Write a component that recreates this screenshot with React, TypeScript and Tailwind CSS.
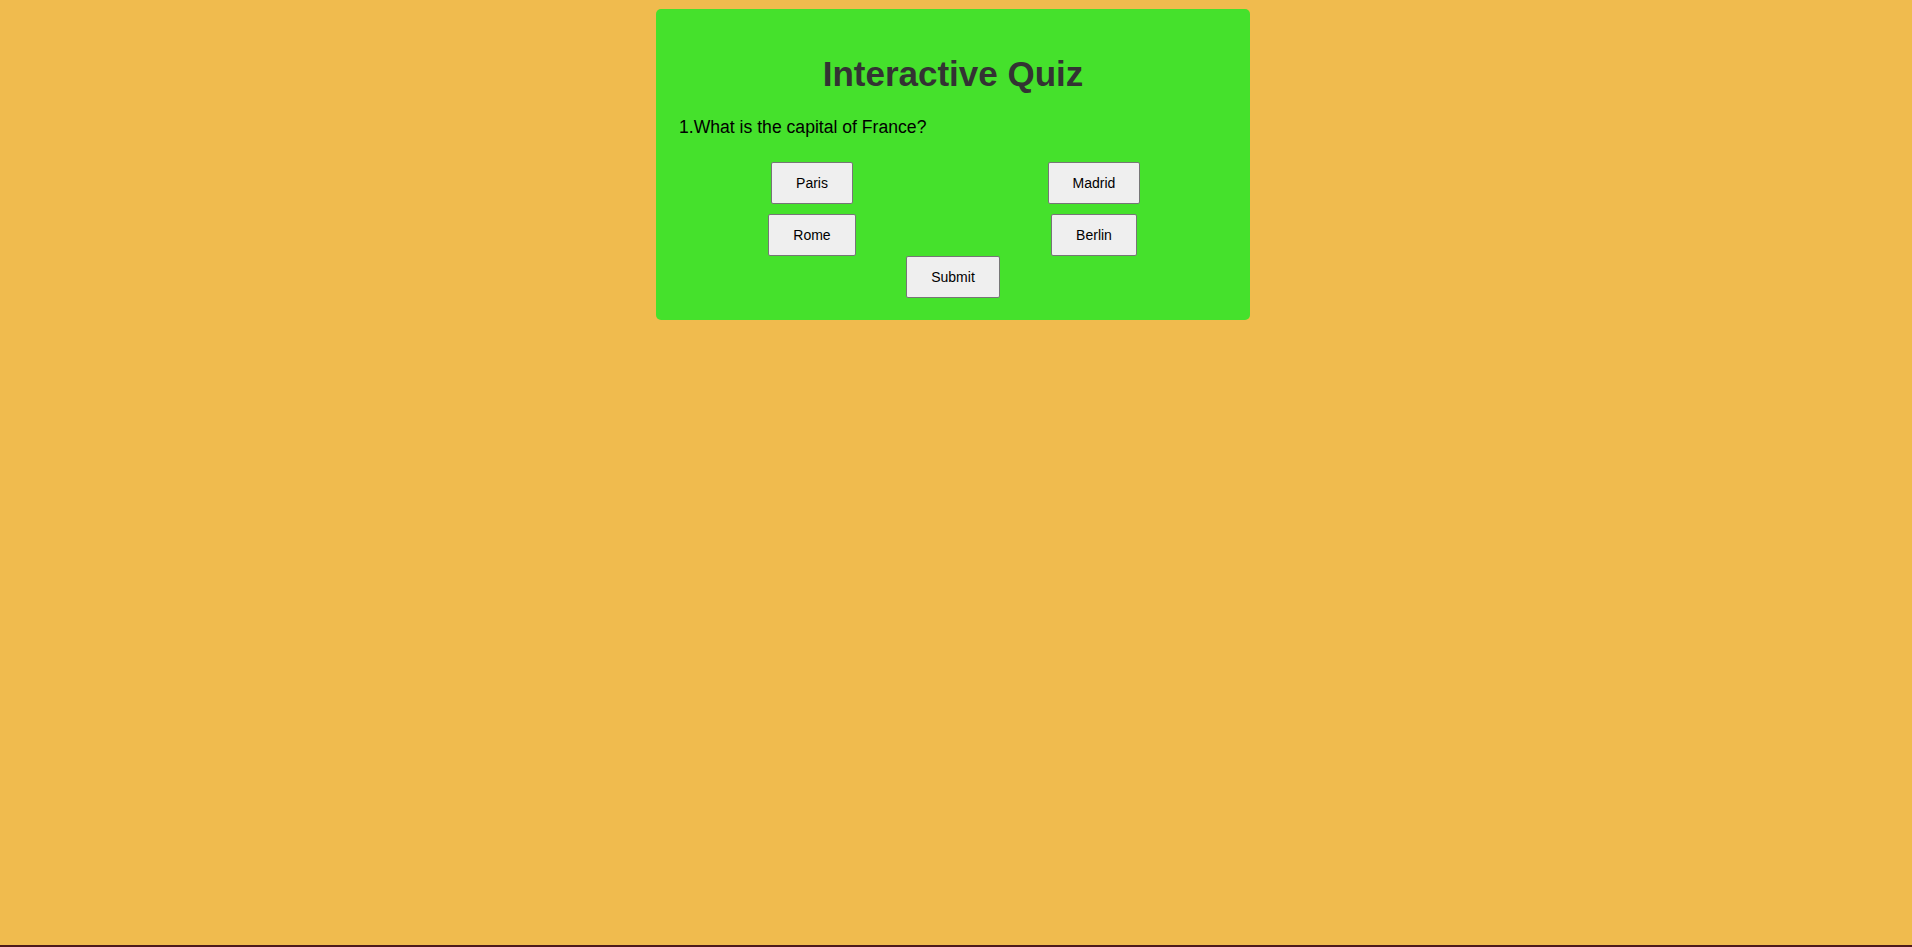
import React, { useState } from 'react';

const options = [
  { label: 'Paris', align: 'left' },
  { label: 'Madrid', align: 'right' },
  { label: 'Rome', align: 'left' },
  { label: 'Berlin', align: 'right' },
];

export default function App() {
  const [picked, setPicked] = useState<string | null>(null);

  return (
    <div
      className="h-[947px] bg-[#f0bb4e] border-b-2 border-[#4e1a1c] pt-[9px] pr-[6px] flex justify-center items-start"
      style={{ fontFamily: '"Liberation Sans", Arial, sans-serif' }}
    >
      <div className="w-[594px] bg-[#45e12c] rounded-[5px] px-[21px] pt-[45px] pb-[22px]">
        <h1 className="text-[35px] leading-[40px] font-bold text-[#333333] text-center">Interactive Quiz</h1>
        <p className="mt-[23px] pl-[2px] text-[17.6px] leading-[20px] text-black">1.What is the capital of France?</p>

        {/* answer buttons */}
        <div className="mt-[25px] grid grid-cols-2 gap-x-[12px] gap-y-[10px]">
          {options.map((o) => (
            <div key={o.label} className="flex justify-center">
              <button
                onClick={() => setPicked(o.label)}
                className={`h-[42px] px-[24px] text-[14px] text-black border border-[#767676] rounded-[2px] ${
                  picked === o.label ? 'bg-[#dcdcdc]' : 'bg-[#efefef]'
                }`}
              >
                {o.label}
              </button>
            </div>
          ))}
        </div>

        <div className="flex justify-center">
          <button className="h-[42px] px-[24px] text-[14px] text-black bg-[#efefef] border border-[#767676] rounded-[2px]">
            Submit
          </button>
        </div>
      </div>
    </div>
  );
}
